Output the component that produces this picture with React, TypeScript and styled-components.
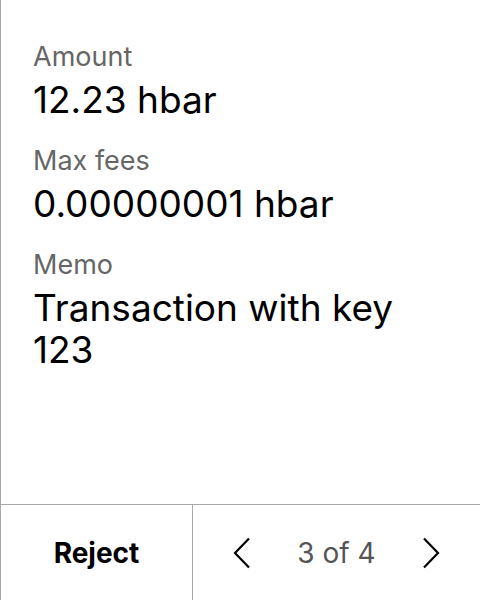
import React from "react";
import styled, { createGlobalStyle } from "styled-components";

const Global = createGlobalStyle`
  html, body { margin: 0; padding: 0; background: #fff; }
  body { font-family: Inter, "Noto Sans", sans-serif; }
`;

const Screen = styled.div`
  width: 480px;
  height: 600px;
  box-sizing: border-box;
  border-left: 1px solid #a8a8a8;
  display: flex;
  flex-direction: column;
  background: #fff;
`;

const Content = styled.div`
  flex: 1;
  padding: 41px 32px 0 32px;
  display: flex;
  flex-direction: column;
  gap: 24px;
`;

const Field = styled.div`
  display: flex;
  flex-direction: column;
  gap: 6px;
`;

const Label = styled.div`
  font-size: 27px;
  line-height: 32px;
  color: #666;
`;

const Value = styled.div`
  font-size: 37px;
  line-height: 42px;
  color: #000;
`;

const Footer = styled.div`
  height: 96px;
  border-top: 1px solid #a8a8a8;
  box-sizing: border-box;
  display: grid;
  grid-template-columns: 192px 1fr;
`;

const RejectButton = styled.button`
  border: 0;
  border-right: 1px solid #a8a8a8;
  background: transparent;
  font-family: inherit;
  font-weight: 700;
  font-size: 28px;
  color: #000;
  padding: 0;
`;

const Pager = styled.div`
  display: flex;
  align-items: center;
  justify-content: center;
  gap: 46px;
`;

const Arrow = styled.button`
  border: 0;
  background: transparent;
  padding: 0;
  display: flex;
  align-items: center;
`;

const Count = styled.span`
  font-size: 28px;
  color: #555;
`;

const Chevron = ({ dir }: { dir: "left" | "right" }) => (
  <svg width="18" height="32" viewBox="0 0 18 32" fill="none">
    <path
      d={dir === "left" ? "M16 1.5 L2 16 L16 30.5" : "M2 1.5 L16 16 L2 30.5"}
      stroke="#000"
      strokeWidth="2.2"
    />
  </svg>
);

export default function App() {
  return (
    <>
      <Global />
      <Screen>
        <Content>
          <Field>
            <Label>Amount</Label>
            <Value>12.23 hbar</Value>
          </Field>
          <Field>
            <Label>Max fees</Label>
            <Value>0.00000001 hbar</Value>
          </Field>
          <Field>
            <Label>Memo</Label>
            <Value>Transaction with key 123</Value>
          </Field>
        </Content>
        <Footer>
          <RejectButton>Reject</RejectButton>
          <Pager>
            <Arrow><Chevron dir="left" /></Arrow>
            <Count>3 of 4</Count>
            <Arrow><Chevron dir="right" /></Arrow>
          </Pager>
        </Footer>
      </Screen>
    </>
  );
}
